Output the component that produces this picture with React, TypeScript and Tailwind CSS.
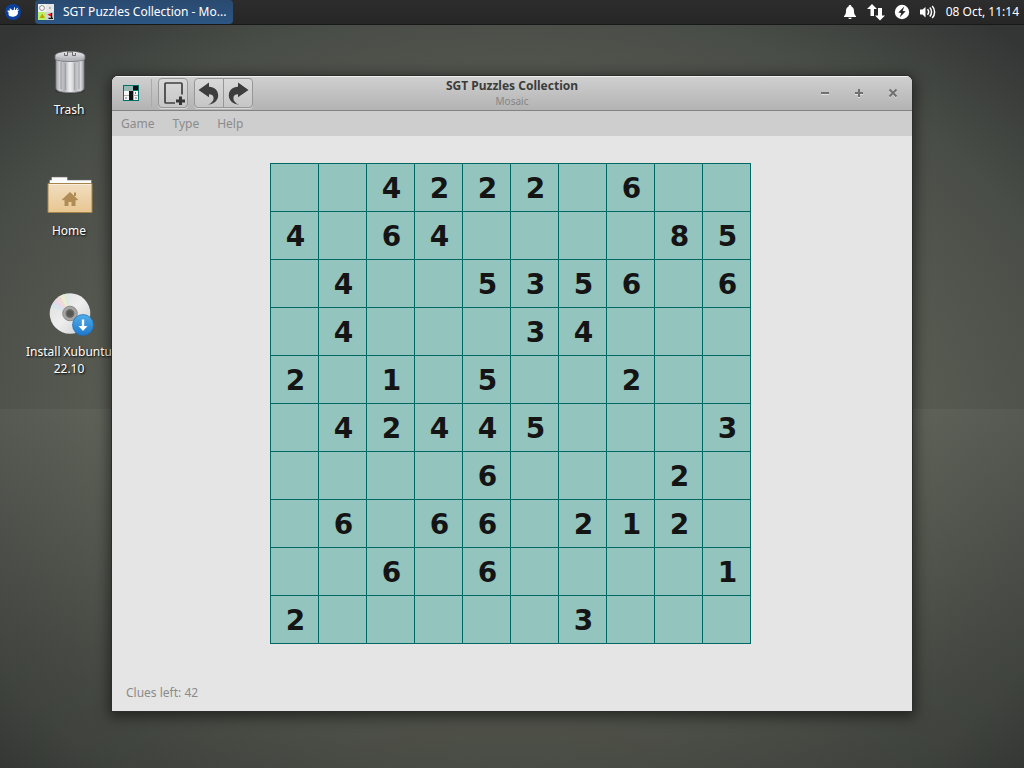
import React from "react";

const ROWS = [
  "..4222.6..",
  "4.64....85",
  ".4..5356.6",
  ".4...34...",
  "2.1.5..2..",
  ".42445...3",
  "....6...2.",
  ".6.66.212.",
  "..6.6....1",
  "2.....3...",
];

function MouseLogo() {
  return (
    <svg viewBox="0 0 16 16" className="h-4 w-4" aria-hidden="true">
      <circle cx="8" cy="8" r="8" fill="#0b419c" />
      <path d="M2.500 6.800c.6-.5 1.600-.4 2.300.1L4.600 4.700c.7-.5 1.500-.1 1.900.8l.9.8 1.200-.3.500-2.600.9-.2-.1 2.700.7.100 1.500-2.300.8.300-.9 2.400 1.500-.9.500.6-1.300 1.500c.7 1.500.2 2.900-1.100 3.800-1.500 1-3.500 1.400-5.400 1.200-1.700-.2-2.700-1.200-2.700-2.500 0-.7.100-1 .3-1.400-.8-.4-1.300-1-1.300-1.900z" fill="#fff" />
    </svg>
  );
}

function PuzzleIcon() {
  return (
    <svg viewBox="0 0 16 16" className="h-4 w-4 shrink-0" aria-hidden="true">
      <path d="M0 0h16v16H0z" fill="#f1f1f1" />
      <path d="M8 0h8v8H8z" fill="#e6e6e6" />
      <path d="M8 8h8v8H8z" fill="#d2d2d2" />
      <path d="M0 8h8v8H0z" fill="#b6f26b" />
      <circle cx="4" cy="4" r="2.400" fill="#fff" stroke="#8b8b8b" />
      <circle cx="12" cy="4" r="1.200" fill="#b5b5b5" />
      <path d="M4.300 9.500L7 14H1.500z" fill="#c4a000" />
      <path d="M9.500 10.500l4-1.500v4z" fill="#e81010" />
      <path d="M13 9h1.200v4.700H15V15h-4.500v-1.300H13z" fill="#111" />
    </svg>
  );
}

function BellIcon() {
  return (
    <svg viewBox="0 0 16 16" className="h-4 w-4" fill="#fff" aria-hidden="true">
      <path d="M8 1c.9 0 1.400.6 1.400 1.400 1.800.7 2.600 2.300 2.600 4.600 0 2.600.6 4 2 5v1H2v-1c1.400-1 2-2.400 2-5 0-2.300.8-3.900 2.600-4.600C6.600 1.600 7.100 1 8 1zM6.200 13.700h3.600c-.2.900-.9 1.300-1.800 1.300s-1.600-.4-1.800-1.300z" />
    </svg>
  );
}

function NetworkIcon() {
  return (
    <svg viewBox="0 0 18 18" className="h-[18px] w-[18px]" fill="#fff" aria-hidden="true">
      <path d="M5 1l5 5H7v7H3.500V6H0zM13 17.500l-5-5h3V5h4v7.500h3z" />
    </svg>
  );
}

function PowerIcon() {
  return (
    <svg viewBox="0 0 16 16" className="h-4 w-4" aria-hidden="true">
      <circle cx="8" cy="8" r="7.200" fill="#fff" />
      <path d="M10.200 2.500L4.300 8.600l3 .4-1.700 4.600 6.100-6.300-3-.4z" fill="#292929" />
    </svg>
  );
}

function VolumeIcon() {
  return (
    <svg viewBox="0 0 18 16" className="h-4 w-[18px]" aria-hidden="true">
      <path d="M1 5.500h2.500L6.500 3v10.500l-3-3H1z" fill="#fff" />
      <path d="M8.500 5.300c1.300 1.500 1.300 3.900 0 5.400M10.800 3.600c2.300 2.500 2.300 6.300 0 8.800M13.200 2c3.200 3.300 3.200 8.700 0 12" fill="none" stroke="#fff" strokeWidth="1.500" />
    </svg>
  );
}

function TrashIcon() {
  return (
    <svg viewBox="0 0 48 48" className="h-12 w-12" aria-hidden="true">
      <defs>
        <linearGradient id="can">
          <stop offset="0" stopColor="#9fa0a6" />
          <stop offset=".12" stopColor="#d0d0d4" />
          <stop offset=".3" stopColor="#b4b5ba" />
          <stop offset=".5" stopColor="#efeff0" />
          <stop offset=".7" stopColor="#bdbec3" />
          <stop offset=".88" stopColor="#dadade" />
          <stop offset="1" stopColor="#97989e" />
        </linearGradient>
        <linearGradient id="lid" x2="0" y2="1">
          <stop offset="0" stopColor="#e6e6e8" />
          <stop offset="1" stopColor="#b6b7bb" />
        </linearGradient>
      </defs>
      <ellipse cx="24" cy="43" rx="15" ry="2.500" fill="#222" opacity=".35" />
      <path d="M10 9v31c0 3 5 4.500 14 4.500S38 43 38 40V9z" fill="url(#can)" stroke="#85868c" strokeWidth=".7" />
      <path d="M15 14v27M19.500 15v27M28.500 15v27M33 14v27" stroke="#66676d" strokeWidth="1.300" opacity=".35" />
      <path d="M9 8c0-3 7-4.500 15-4.500S39 5 39 8v2.500c0 2-7 3-15 3s-15-1-15-3z" fill="#b4b5ba" stroke="#6d6e74" strokeWidth=".8" />
      <ellipse cx="24" cy="7.500" rx="14.300" ry="3.700" fill="url(#lid)" />
      <path d="M18.500 5v2.500h3V4h5v3.500h3V5" fill="none" stroke="#696a6d" />
    </svg>
  );
}

function HomeIcon() {
  return (
    <svg viewBox="0 0 48 48" className="h-12 w-12" aria-hidden="true">
      <defs>
        <linearGradient id="folder" x2="0" y2="1">
          <stop offset="0" stopColor="#f1dec0" />
          <stop offset="1" stopColor="#e8c691" />
        </linearGradient>
      </defs>
      <path d="M3.500 16V11h2V8h16v3h24v6z" fill="#fbfbfb" stroke="#68686a" strokeWidth=".6" />
      <path d="M2 14.500h44v29H2z" fill="url(#folder)" stroke="#a5844a" />
      <path d="M3 15.500h42" stroke="#f9ecd8" />
      <path d="M24 23l8 7.500-.5.800H29.500V37h-4v-4h-3v4h-4v-5.700H16.500l-.5-.8zM28 23.500h2V27h-2z" fill="#b08d56" />
    </svg>
  );
}

function DiscIcon() {
  return (
    <svg viewBox="0 0 48 48" className="h-12 w-12" aria-hidden="true">
      <defs>
        <linearGradient id="disc" x2="1" y2="1">
          <stop offset="0" stopColor="#dcdcdc" />
          <stop offset=".5" stopColor="#eeeeee" />
          <stop offset="1" stopColor="#c9c9c9" />
        </linearGradient>
        <linearGradient id="badge" x2="0" y2="1">
          <stop offset="0" stopColor="#50ade9" />
          <stop offset="1" stopColor="#1e78cc" />
        </linearGradient>
      </defs>
      <circle cx="24" cy="23.500" r="20.300" fill="url(#disc)" />
      <g opacity=".6">
        <path d="M24 23.500L5 17l2-4z" fill="#c9e6ec" />
        <path d="M24 23.500L7 13l3-4z" fill="#e6d1f0" />
        <path d="M24 23.500L10 9l4-3z" fill="#f8d4cc" />
        <path d="M24 23.500L14 6l4-2z" fill="#f1f4c7" />
        <path d="M24 23.500L18 4l4-.5z" fill="#d6efd6" />
      </g>
      <circle cx="24" cy="23.500" r="7.300" fill="#a5a6a3" stroke="#8a8b88" />
      <circle cx="24" cy="23.500" r="3.800" fill="#545850" stroke="#6d6d6a" strokeWidth="1.400" />
      <circle cx="37" cy="35" r="10.500" fill="url(#badge)" stroke="#1d6cb6" strokeWidth=".7" />
      <path d="M35.800 29.500h2.400V36h3.300L37 41l-4.500-5h3.300z" fill="#fff" />
    </svg>
  );
}

function MosaicIcon() {
  return (
    <svg viewBox="0 0 16 16" className="h-4 w-4" aria-hidden="true">
      <path d="M0 0h16v16H0z" fill="#00706b" />
      <path d="M1 1h9v5H1z" fill="#8dbdb5" />
      <path d="M10 1h5v4h-5zM6 6h4v9H6z" fill="#111" />
      <path d="M1 6h5v9H1zM10 6h5v9h-5z" fill="#f6f6f6" />
      <path d="M1 10.500h5M10 10.500h5M10.500 6v9M5.500 1v5" stroke="#a9aaa9" />
      <path d="M3 12v2M12.500 7v2M13 12v2" stroke="#777" />
    </svg>
  );
}

function NewIcon() {
  return (
    <svg viewBox="0 0 24 24" className="h-6 w-6" aria-hidden="true">
      <path d="M14 22H5Q4 22 4 21V3Q4 2 5 2h15q1 0 1 1v10.500" fill="none" stroke="#404040" strokeWidth="1.700" />
      <path d="M18 15.500h3v3h3v3h-3v3h-3v-3h-3v-3h3z" fill="#353535" />
    </svg>
  );
}

function UndoIcon({ flip = false }: { flip?: boolean }) {
  return (
    <svg viewBox="0 0 24 24" className={flip ? "h-6 w-6 -scale-x-100" : "h-6 w-6"} aria-hidden="true">
      <path d="M1.500 9L12 1.500V5.800C17.500 6 21.200 9.500 21.200 14.500c0 4.800-4 8.500-10.200 9.200 3.800-1.500 5.600-3.800 5.600-6.400 0-2.600-1.600-4-4.600-4v3z" fill="#3d3d3d" />
    </svg>
  );
}

function Shortcut({ icon, children }: { icon: React.ReactNode; children: React.ReactNode }) {
  return (
    <button className="flex min-h-[70px] flex-col items-center gap-[5px] text-white [text-shadow:1px_1px_2px_#000]">
      <span className="pl-px">{icon}</span>
      <span className="leading-[17px]">{children}</span>
    </button>
  );
}

export default function App() {
  const toolButton =
    "flex h-[30px] w-[30px] items-center justify-center border border-[#979797] bg-linear-to-b from-[#d9d9d9] to-[#c6c6c6] shadow-[0_1px_0_#d8d8d8]";
  const windowButton = "flex h-6 w-6 items-center justify-center";
  return (
    <div className="relative flex min-h-screen flex-col overflow-hidden bg-[#54574e] bg-[radial-gradient(ellipse_72%_72%_at_50%_58%,#64675c_0%,#5b5e54_50%,#494d47_80%,#333635_100%)] font-['Noto_Sans',sans-serif] text-[12px]">
      <div className="pointer-events-none absolute inset-x-0 top-[409px] bottom-0 bg-linear-to-b from-white/4 to-black/15" />
      <header className="relative flex h-[25px] items-center justify-between border-b border-[#181818] bg-linear-to-b from-[#2d2d2d] to-[#262626] px-[5px] text-white">
        <div className="flex items-center gap-[14px]">
          <button aria-label="Applications">
            <MouseLogo />
          </button>
          <button className="flex h-6 w-[198px] items-center gap-[9px] rounded-sm bg-linear-to-b from-[#2a4a70] to-[#2c5583] px-[3px] whitespace-nowrap">
            <PuzzleIcon />
            <span>SGT Puzzles Collection - Mo...</span>
          </button>
        </div>
        <div className="flex items-center gap-[9px]">
          <button aria-label="Notifications"><BellIcon /></button>
          <button aria-label="Network"><NetworkIcon /></button>
          <button aria-label="Power"><PowerIcon /></button>
          <button aria-label="Volume"><VolumeIcon /></button>
          <time>08 Oct, 11:14</time>
        </div>
      </header>

      <main className="relative flex-1">
        <nav aria-label="Desktop" className="flex w-[138px] flex-col gap-[51px] pt-[23px]">
          <Shortcut icon={<TrashIcon />}>Trash</Shortcut>
          <Shortcut icon={<HomeIcon />}>Home</Shortcut>
          <Shortcut icon={<DiscIcon />}>Install Xubuntu<br />22.10</Shortcut>
        </nav>

        <section
          aria-label="SGT Puzzles Collection"
          className="absolute inset-x-28 top-[51px] flex flex-col overflow-hidden rounded-t-md bg-[#e5e5e5] shadow-[0_0_0_1px_#2b2e2b,0_3px_14px_3px_rgba(0,0,0,0.5)]"
        >
          <div className="grid h-[35px] grid-cols-[1fr_auto_1fr] items-center border-b border-[#838383] bg-linear-to-b from-[#d0d0d0] to-[#b3b3b3] px-[7px] shadow-[inset_0_1px_0_#f0f0f0]">
            <div className="flex items-center pl-1">
              <MosaicIcon />
              <span className="ml-3 h-7 border-l border-[#aaaaaa]" />
              <button aria-label="New game" className={toolButton + " ml-[6px] rounded-sm"}><NewIcon /></button>
              <button aria-label="Undo" className={toolButton + " ml-[6px] rounded-l-sm"}><UndoIcon /></button>
              <button aria-label="Redo" className={toolButton + " -ml-px rounded-r-sm"}><UndoIcon flip /></button>
            </div>
            <div className="text-center">
              <h1 className="text-[12px] leading-4 font-bold text-[#3c3c3c]">SGT Puzzles Collection</h1>
              <p className="text-[10px] leading-[14px] text-[#858585]">Mosaic</p>
            </div>
            <div className="flex justify-end gap-[10px]">
              <button aria-label="Minimize" className={windowButton}>
                <svg viewBox="0 0 10 10" className="h-[10px] w-[10px]"><path d="M1 6.500h8" stroke="#e2e2e2" /><path d="M1 5h8" stroke="#707070" strokeWidth="2" /></svg>
              </button>
              <button aria-label="Maximize" className={windowButton}>
                <svg viewBox="0 0 10 10" className="h-[10px] w-[10px]"><path d="M1 6.500h8M4 9.500h2" stroke="#e2e2e2" /><path d="M1 5h8M5 1v8" stroke="#707070" strokeWidth="2" /></svg>
              </button>
              <button aria-label="Close" className={windowButton}>
                <svg viewBox="0 0 10 10" className="h-[10px] w-[10px]"><path d="M1.500 2.500l7 7M8.500 2.500l-7 7" stroke="#e2e2e2" strokeWidth="1.500" /><path d="M1.500 1.500l7 7M8.500 1.500l-7 7" stroke="#707070" strokeWidth="2" /></svg>
              </button>
            </div>
          </div>
          <div role="menubar" className="flex h-[25px] items-center gap-[18px] bg-[#cecece] px-[9px] text-[#8b8b8b]">
            <button role="menuitem">Game</button>
            <button role="menuitem">Type</button>
            <button role="menuitem">Help</button>
          </div>
          <div className="flex justify-center pt-[27px] pr-[3px]">
            <div className="grid grid-cols-10 gap-px bg-[#006862] p-px">
              {ROWS.flatMap((row, y) =>
                row.split("").map((clue, x) => (
                  <button
                    key={x + "-" + y}
                    aria-label={"Row " + (y + 1) + ", column " + (x + 1) + (clue === "." ? "" : ", clue " + clue)}
                    className="flex h-[47px] w-[47px] items-center justify-center bg-[#94c4be] pt-0.5 pl-0.5 font-['DejaVu_Sans',sans-serif] text-[28px] leading-none font-bold text-[#141414]"
                  >
                    {clue === "." ? "" : clue}
                  </button>
                ))
              )}
            </div>
          </div>
          <p className="px-[14px] pt-10 pb-[10px] leading-[17px] text-[#8b8b8b]">Clues left: 42</p>
        </section>
      </main>
    </div>
  );
}
